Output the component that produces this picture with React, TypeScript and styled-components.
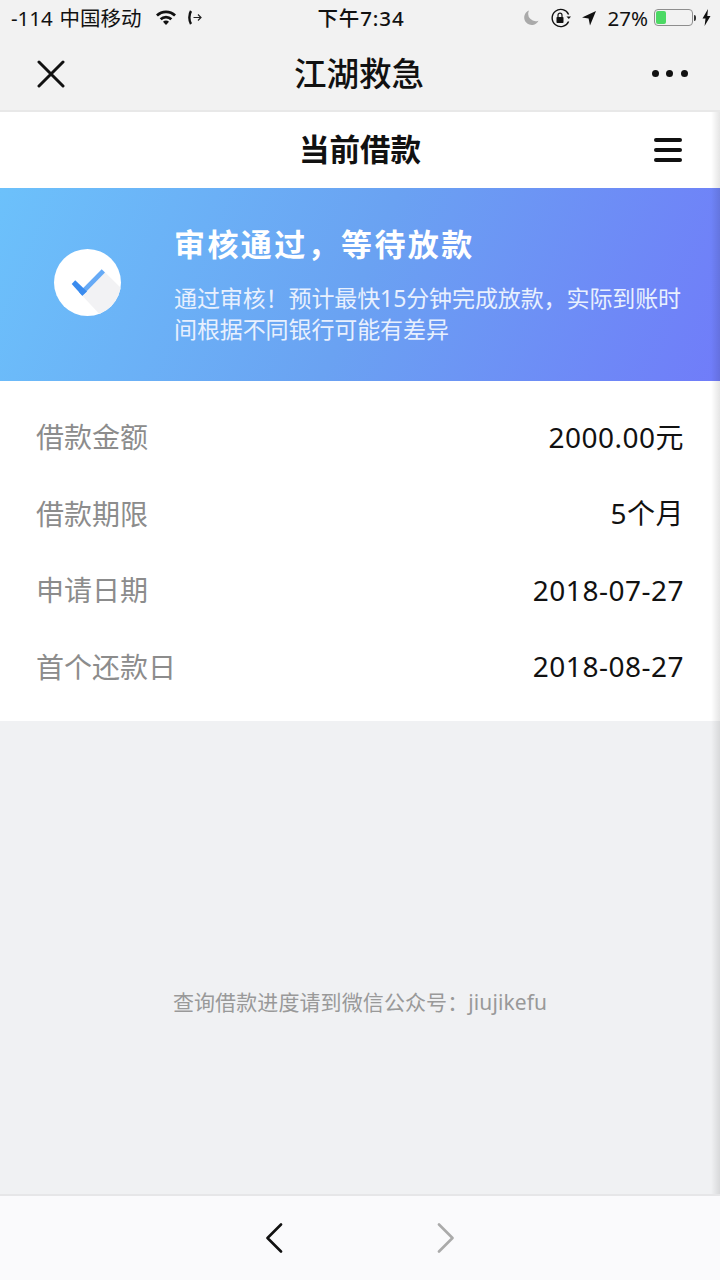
import React from "react";
import styled, { createGlobalStyle } from "styled-components";

const GlobalStyle = createGlobalStyle`
  html, body {
    margin: 0;
    padding: 0;
    background: #f0f1f3;
  }
  body {
    font-family: "Noto Sans", "Noto Sans CJK SC", sans-serif;
  }
`;

const rows = [
  { label: "借款金额", value: "2000.00元" },
  { label: "借款期限", value: "5个月" },
  { label: "申请日期", value: "2018-07-27" },
  { label: "首个还款日", value: "2018-08-27" },
];

const App = () => (
  <Page>
    <GlobalStyle />
    <StatusBar>
      <StatusLeft>
        <StatusText>-114&nbsp; 中国移动</StatusText>
        <svg width="22" height="17" viewBox="0 0 22 17" style={{ marginLeft: 14 }}>
          <path d="M1 5.6a14 14 0 0 1 20 0l-1.9 2a11.4 11.4 0 0 0-16.2 0z" fill="#111" />
          <path d="M4.7 9.3a9 9 0 0 1 12.6 0l-1.9 2a6.4 6.4 0 0 0-8.8 0z" fill="#111" />
          <path d="M8 12.8a4.2 4.2 0 0 1 6 0L11 16z" fill="#111" />
        </svg>
        <svg width="16" height="17" viewBox="0 0 16 17" style={{ marginLeft: 10 }}>
          <path d="M4 2C1.8 5.5 1.8 11.5 4 15" fill="none" stroke="#111" strokeWidth="2.4" />
          <path d="M6.5 8.5h7.5M11 5.5l3 3-3 3" fill="none" stroke="#222" strokeWidth="1.2" />
        </svg>
      </StatusLeft>
      <StatusTime>下午7:34</StatusTime>
      <StatusRight>
        <svg width="18" height="18" viewBox="0 0 18 18">
          <path d="M7 1.5a7.5 7.5 0 1 0 9.5 10.2A7.5 7.5 0 0 1 7 1.5z" fill="#aaa" />
        </svg>
        <svg width="22" height="20" viewBox="0 0 22 20" style={{ marginLeft: 10 }}>
          <path d="M18.6 6.5A8.6 8.6 0 1 0 18.6 13.5" fill="none" stroke="#111" strokeWidth="1.4" />
          <path d="M16.5 8.5h4.5l-2.2 2.6z" fill="#111" />
          <rect x="6.5" y="9" width="7" height="6" rx="0.8" fill="#111" />
          <path d="M8 9V7.2a2 2 0 0 1 4 0V9" fill="none" stroke="#111" strokeWidth="1.2" />
        </svg>
        <svg width="16" height="16" viewBox="0 0 16 16" style={{ marginLeft: 9 }}>
          <path d="M15 1L1 7.4l6.6 1.2L9 15.5z" fill="#111" />
        </svg>
        <StatusText $gap={11}>27%</StatusText>
        <Battery>
          <BatteryFill style={{ width: "29%" }} />
        </Battery>
        <BatteryCap />
        <svg width="9" height="17" viewBox="0 0 9 17" style={{ marginLeft: 6 }}>
          <path d="M6 0L0.5 9.5h3L2.6 17 8.5 7h-3.2z" fill="#111" />
        </svg>
      </StatusRight>
    </StatusBar>

    <NavBar>
      <NavIcon>
        <svg width="30" height="30" viewBox="0 0 30 30">
          <path d="M3 4l24 24M27 4L3 28" stroke="#111" strokeWidth="3" strokeLinecap="round" fill="none" />
        </svg>
      </NavIcon>
      <NavTitle>江湖救急</NavTitle>
      <MoreDots>
        <Dot />
        <Dot />
        <Dot />
      </MoreDots>
    </NavBar>

    <TitleBar>
      <PageTitle>当前借款</PageTitle>
      <MenuIcon>
        <MenuLine />
        <MenuLine />
        <MenuLine />
      </MenuIcon>
    </TitleBar>

    <Banner>
      <CheckBadge>
        <svg width="67" height="67" viewBox="0 0 67 67">
          <path d="M28.3 46.7L51 23.3 L72 44 L50 70z" fill="#f2f2f4" />
          <path d="M25 43.2L47.7 20.3 51 23.5 28.3 46.7z" fill="#66aaf6" />
          <path d="M17.7 35L21.2 31.2 33 42.5 28.3 46.7z" fill="#3a8bee" />
        </svg>
      </CheckBadge>
      <BannerText>
        <BannerTitle>审核通过，等待放款</BannerTitle>
        <BannerDesc>通过审核！预计最快15分钟完成放款，实际到账时间根据不同银行可能有差异</BannerDesc>
      </BannerText>
    </Banner>

    <DetailList>
      {rows.map((row) => (
        <DetailRow key={row.label}>
          <DetailLabel>{row.label}</DetailLabel>
          <DetailValue>{row.value}</DetailValue>
        </DetailRow>
      ))}
    </DetailList>

    <Content>
      <Hint>查询借款进度请到微信公众号：jiujikefu</Hint>
    </Content>

    <BottomBar>
      <svg width="18" height="30" viewBox="0 0 18 30">
        <path d="M16 1.5L2.5 15 16 28.5" fill="none" stroke="#111" strokeWidth="2.6" strokeLinecap="round" strokeLinejoin="round" />
      </svg>
      <svg width="18" height="30" viewBox="0 0 18 30">
        <path d="M2 1.5L15.5 15 2 28.5" fill="none" stroke="#aaa" strokeWidth="2.6" strokeLinecap="round" strokeLinejoin="round" />
      </svg>
    </BottomBar>

    <EdgeShade />
  </Page>
);

const Page = styled.div`
  position: relative;
  width: 720px;
  height: 1280px;
  display: flex;
  flex-direction: column;
  overflow: hidden;
  background: #f0f1f3;
`;

const EdgeShade = styled.div`
  position: absolute;
  top: 112px;
  right: 0;
  bottom: 86px;
  width: 9px;
  background: linear-gradient(to right, rgba(0, 0, 0, 0), rgba(0, 0, 0, 0.1));
  pointer-events: none;
`;

const StatusBar = styled.div`
  height: 36px;
  box-sizing: border-box;
  padding: 0 9px 1px 11px;
  display: grid;
  grid-template-columns: 1fr auto 1fr;
  align-items: center;
  background: #f2f2f2;
  color: #111;
`;

const StatusLeft = styled.div`
  display: flex;
  align-items: center;
`;

const StatusRight = styled.div`
  display: flex;
  align-items: center;
  justify-content: flex-end;
`;

const StatusText = styled.span<{ $gap?: number }>`
  font-size: 20.5px;
  line-height: 28px;
  word-spacing: -2px;
  white-space: nowrap;
  margin-left: ${({ $gap }) => $gap ?? 0}px;
`;

const StatusTime = styled.span`
  font-size: 20.5px;
  line-height: 28px;
  letter-spacing: 0.9px;
  font-weight: 500;
`;

const Battery = styled.div`
  margin-left: 6px;
  width: 35px;
  height: 13px;
  padding: 1px;
  border: 1px solid #8e8e8e;
  border-radius: 4px;
`;

const BatteryFill = styled.div`
  height: 100%;
  background: #4cd964;
  border-radius: 2px;
`;

const BatteryCap = styled.div`
  width: 2px;
  height: 6px;
  margin-left: 1px;
  background: #333;
  border-radius: 0 2px 2px 0;
`;

const NavBar = styled.div`
  height: 74px;
  padding: 0 20px 0 36px;
  display: flex;
  align-items: center;
  justify-content: space-between;
  background: #f2f2f2;
  border-bottom: 2px solid #e8e8e8;
`;

const NavIcon = styled.div`
  width: 30px;
  height: 30px;
`;

const NavTitle = styled.div`
  font-size: 32.5px;
  line-height: 40px;
  margin-top: 2px;
  font-weight: 500;
  color: #111;
`;

const MoreDots = styled.div`
  width: 36px;
  display: flex;
  justify-content: space-between;
  margin-right: 12px;
`;

const Dot = styled.span`
  width: 7px;
  height: 7px;
  border-radius: 50%;
  background: #111;
`;

const TitleBar = styled.div`
  position: relative;
  height: 76px;
  display: flex;
  align-items: center;
  justify-content: center;
  background: #fff;
`;

const PageTitle = styled.div`
  font-size: 30.5px;
  line-height: 40px;
  margin-top: -2px;
  font-weight: 700;
  color: #111;
`;

const MenuIcon = styled.div`
  position: absolute;
  right: 38px;
  top: 26px;
  width: 28px;
  height: 24px;
  display: flex;
  flex-direction: column;
  justify-content: space-between;
`;

const MenuLine = styled.span`
  height: 4px;
  border-radius: 2px;
  background: #111;
`;

const Banner = styled.div`
  height: 193px;
  box-sizing: border-box;
  padding: 0 36px 0 54px;
  display: flex;
  align-items: center;
  background: linear-gradient(112deg, #6cc1fb 0%, #6aa2f2 50%, #707cf9 100%);
`;

const CheckBadge = styled.div`
  width: 67px;
  height: 67px;
  flex-shrink: 0;
  margin-bottom: 4px;
  border-radius: 50%;
  overflow: hidden;
  background: #fff;
`;

const BannerText = styled.div`
  margin-left: 53px;
  padding-bottom: 2px;
  color: #fff;
`;

const BannerTitle = styled.div`
  font-size: 31px;
  font-weight: 700;
  letter-spacing: 2.4px;
  line-height: 44px;
`;

const BannerDesc = styled.div`
  margin-top: 17px;
  font-size: 23px;
  letter-spacing: -0.1px;
  line-height: 31px;
  color: #e8f0fe;
`;

const DetailList = styled.div`
  padding: 18px 36px 16px;
  background: #fff;
`;

const DetailRow = styled.div`
  height: 76.5px;
  display: flex;
  align-items: center;
  justify-content: space-between;
`;

const DetailLabel = styled.span`
  font-size: 28px;
  line-height: 36px;
  color: #8c8c8c;
`;

const DetailValue = styled.span`
  font-size: 28px;
  line-height: 36px;
  margin-top: -1px;
  letter-spacing: 0.5px;
  color: #111;
`;

const Content = styled.div`
  flex: 1;
  display: flex;
  justify-content: center;
  padding-top: 267px;
`;

const Hint = styled.div`
  font-size: 21px;
  line-height: 28px;
  letter-spacing: 0.1px;
  color: #999;
`;

const BottomBar = styled.div`
  height: 84px;
  flex-shrink: 0;
  display: flex;
  align-items: center;
  justify-content: center;
  gap: 154px;
  background: #fafafc;
  border-top: 2px solid #e6e6e8;
`;

export default App;
